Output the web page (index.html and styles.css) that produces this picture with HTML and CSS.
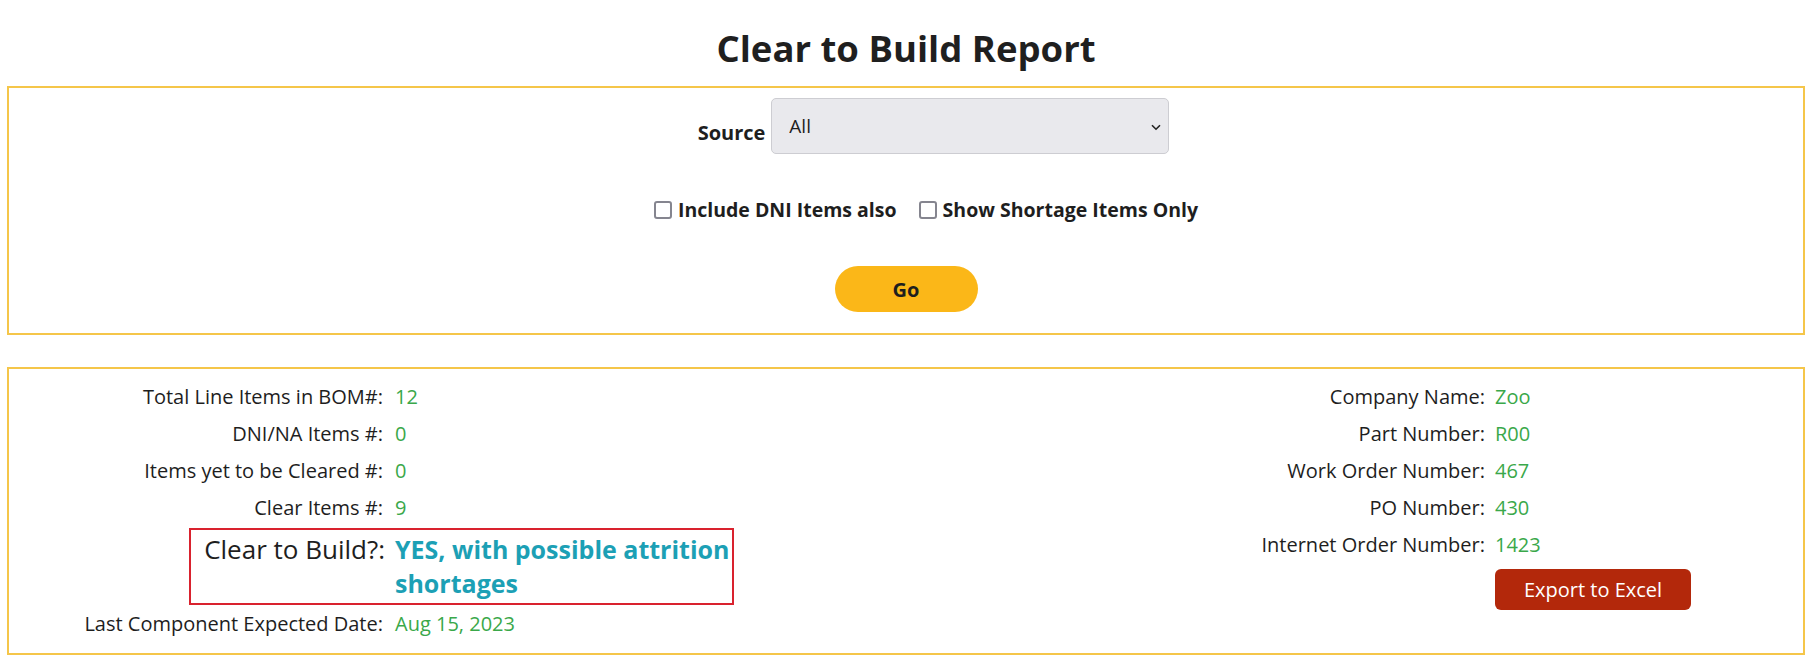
FILE: index.html
```html
<!DOCTYPE html>
<html lang="en">
<head>
<meta charset="utf-8">
<title>Clear to Build Report</title>
<link rel="stylesheet" href="styles.css">
</head>
<body>
<div class="page">
  <h1 class="title">Clear to Build Report</h1>

  <section class="panel filters">
    <div class="source-row">
      <label class="source-label" for="src">Source</label>
      <span class="select-wrap">
        <select id="src" class="select"><option>All</option></select>
        <svg class="chev" width="10" height="7" viewBox="0 0 10 7"><path d="M1 1.2 L5 5.2 L9 1.2" fill="none" stroke="#222" stroke-width="1.6"/></svg>
      </span>
    </div>
    <div class="check-row">
      <label class="check"><input type="checkbox" class="box">Include DNI Items also</label>
      <label class="check"><input type="checkbox" class="box">Show Shortage Items Only</label>
    </div>
    <div class="go-row">
      <button class="go">Go</button>
    </div>
  </section>

  <section class="panel summary">
    <div class="col col-left">
      <div class="lbl">Total Line Items in BOM#:</div><div class="val">12</div>
      <div class="lbl">DNI/NA Items #:</div><div class="val">0</div>
      <div class="lbl">Items yet to be Cleared #:</div><div class="val">0</div>
      <div class="lbl">Clear Items #:</div><div class="val">9</div>
      <div class="ctb">
        <div class="ctb-lbl">Clear to Build?:</div>
        <div class="ctb-val">YES, with possible attrition shortages</div>
      </div>
      <div class="lbl">Last Component Expected Date:</div><div class="val">Aug 15, 2023</div>
    </div>
    <div class="col col-right">
      <div class="lbl">Company Name:</div><div class="val">Zoo</div>
      <div class="lbl">Part Number:</div><div class="val">R00</div>
      <div class="lbl">Work Order Number:</div><div class="val">467</div>
      <div class="lbl">PO Number:</div><div class="val">430</div>
      <div class="lbl">Internet Order Number:</div><div class="val">1423</div>
      <div class="lbl"></div><div class="val"><button class="export">Export to Excel</button></div>
    </div>
  </section>
</div>
</body>
</html>
```

FILE: styles.css
```css
* { box-sizing: border-box; }

body {
  margin: 0;
  background: #ffffff;
  font-family: "Open Sans", "Liberation Sans", sans-serif;
  color: #1e1e1e;
}

.page {
  padding: 0 7px;
}

.title {
  margin: 0;
  padding-top: 27px;
  height: 86px;
  text-align: center;
  font-size: 36.5px;
  line-height: 42px;
  font-weight: 700;
  color: #1f1f1f;
}

.panel {
  border: 2px solid #f5c64a;
}

.filters {
  height: 249px;
  padding-top: 10px;
}

.source-row {
  display: flex;
  justify-content: center;
  align-items: center;
  gap: 6px;
  margin-left: 55px;
}

.source-label {
  font-size: 20px;
  font-weight: 700;
  padding-top: 12px;
}

.select-wrap {
  position: relative;
  display: inline-block;
}

.select {
  appearance: none;
  -webkit-appearance: none;
  width: 398px;
  height: 56px;
  background: #e9e9ed;
  border: 1px solid #cdcdd2;
  border-radius: 5px;
  padding: 0 17px;
  font-family: inherit;
  font-size: 19px;
  color: #1e1e1e;
}

.chev {
  position: absolute;
  right: 8px;
  top: 26px;
}

.check-row {
  display: flex;
  justify-content: center;
  gap: 22px;
  margin-top: 44px;
  margin-left: 40px;
}

.check {
  display: flex;
  align-items: center;
  gap: 6px;
  font-size: 19.5px;
  font-weight: 700;
  line-height: 24px;
}

.box {
  appearance: none;
  -webkit-appearance: none;
  flex-shrink: 0;
  margin: 0;
  width: 18px;
  height: 18px;
  border: 2px solid #85858f;
  border-radius: 3px;
  background: #fff;
}

.go-row {
  display: flex;
  justify-content: center;
  margin-top: 44px;
}

.go {
  width: 143px;
  height: 46px;
  border: none;
  border-radius: 23px;
  background: #fbb718;
  font-family: inherit;
  font-size: 20px;
  font-weight: 700;
  color: #1e1e1e;
}

.summary {
  margin-top: 32px;
  height: 288px;
  padding-top: 9px;
  display: grid;
  grid-template-columns: 897px 1fr;
}

.col {
  display: grid;
  align-content: start;
  font-size: 20px;
  line-height: 37px;
}

.col-left {
  grid-template-columns: 374px 1fr;
  column-gap: 12px;
}

.col-right {
  grid-template-columns: 579px 1fr;
  column-gap: 10px;
}

.lbl {
  text-align: right;
  color: #1e1e1e;
  white-space: nowrap;
}

.val {
  color: #3aa84a;
  white-space: nowrap;
}

.ctb {
  grid-column: 1 / -1;
  margin-top: 2px;
  margin-left: 180px;
  width: 545px;
  border: 2px solid #d9222e;
  padding: 2px 0 3px;
  display: grid;
  grid-template-columns: 194px 337px;
  column-gap: 10px;
  font-size: 25px;
  line-height: 34px;
}

.ctb-lbl {
  text-align: right;
  color: #1e1e1e;
  white-space: nowrap;
  font-size: 26px;
}

.ctb-val {
  color: #1ca0b5;
  font-weight: 700;
}

.export {
  margin-top: 6px;
  width: 196px;
  height: 41px;
  border: none;
  border-radius: 6px;
  background: #b3280b;
  color: #ffffff;
  font-family: inherit;
  font-size: 20px;
  display: block;
}
```
